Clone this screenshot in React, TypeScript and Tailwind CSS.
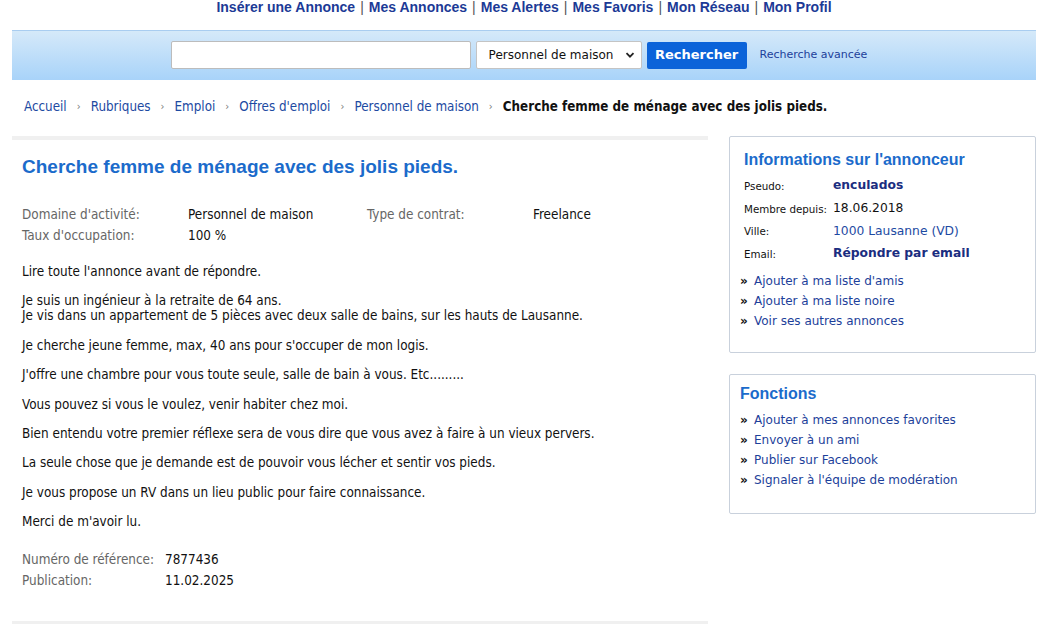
import React from 'react';

const navLinks = ['Insérer une Annonce', 'Mes Annonces', 'Mes Alertes', 'Mes Favoris', 'Mon Réseau', 'Mon Profil'];
const crumbs = ['Accueil', 'Rubriques', 'Emploi', "Offres d'emploi", 'Personnel de maison'];

const paragraphs: string[][] = [
  ["Lire toute l'annonce avant de répondre."],
  [
    'Je suis un ingénieur à la retraite de 64 ans.',
    'Je vis dans un appartement de 5 pièces avec deux salle de bains, sur les hauts de Lausanne.',
  ],
  ["Je cherche jeune femme, max, 40 ans pour s'occuper de mon logis."],
  ['J\'offre une chambre pour vous toute seule, salle de bain à vous. Etc.........'],
  ['Vous pouvez si vous le voulez, venir habiter chez moi.'],
  ['Bien entendu votre premier réflexe sera de vous dire que vous avez à faire à un vieux pervers.'],
  ['La seule chose que je demande est de pouvoir vous lécher et sentir vos pieds.'],
  ['Je vous propose un RV dans un lieu public pour faire connaissance.'],
  ["Merci de m'avoir lu."],
];

const tahoma = "font-['Tahoma','DejaVu_Sans_Condensed','Liberation_Sans',sans-serif]";
const verdana = "font-['Verdana','DejaVu_Sans',sans-serif]";
const arial = "font-['Arial','Liberation_Sans',sans-serif]";

function LinkList({ items }: { items: string[] }) {
  return (
    <ul className={`${verdana} text-[12px] leading-[20px]`}>
      {items.map((t) => (
        <li key={t} className="flex items-center">
          <span className="w-[14px] text-[12px] font-bold text-[#111]">»</span>
          <a href="#" className="text-[#1d3f9a]">{t}</a>
        </li>
      ))}
    </ul>
  );
}

function App() {
  return (
    <div className="min-h-screen bg-white">
      <div className="mx-3 w-[1024px]">
        {/* top navigation */}
        <nav className={`${arial} flex h-[30px] justify-center text-[14px] font-bold leading-[14px] text-[#1c3a96]`}>
          {navLinks.map((l, i) => (
            <span key={l}>
              {i > 0 && <span className="px-[5px] font-normal text-[#555]">|</span>}
              <a href="#">{l}</a>
            </span>
          ))}
        </nav>

        {/* search bar */}
        <div className="flex h-[50px] items-center justify-center gap-[5px] border-t border-[#a9cdf0] bg-gradient-to-b from-[#d5e9f9] to-[#a8d3f9] pb-[1px] pr-[10px]">
          <input className="h-[28px] w-[300px] rounded-[2px] border border-[#bcbcbc] bg-white" />
          <div className={`${verdana} flex h-[28px] w-[166px] items-center justify-between rounded-[2px] border border-[#c4c4c4] bg-white pl-[12px] pr-[6px] text-[12px] text-[#111]`}>
            <span>Personnel de maison</span>
            <svg width="10" height="10" viewBox="0 0 10 10">
              <path d="M1.5 3.2 L5 6.7 L8.5 3.2" fill="none" stroke="#222" strokeWidth="1.8" />
            </svg>
          </div>
          <button className={`${verdana} h-[27px] w-[100px] rounded-[2px] bg-[#0b63d9] text-[13px] font-bold text-white`}>
            Rechercher
          </button>
          <a href="#" className={`${verdana} ml-[8px] text-[11px] text-[#1d3f9a]`}>
            Recherche avancée
          </a>
        </div>

        {/* breadcrumb */}
        <div className={`${tahoma} flex h-[56px] items-center pb-[2px] pl-[12px] text-[13.3px]`}>
          {crumbs.map((c) => (
            <span key={c} className="flex items-center">
              <a href="#" className="text-[#1d4aa2]">{c}</a>
              <span className="px-[10px] text-[11px] text-[#777]">›</span>
            </span>
          ))}
          <span className="font-bold text-[#111]">Cherche femme de ménage avec des jolis pieds.</span>
        </div>

        <div className="flex gap-[21px]">
          {/* main column */}
          <div className="w-[696px]">
            <div className="h-[4px] bg-[#f0f0f0]" />
            <div className={`${tahoma} px-[10px] pb-[30px] text-[13.4px] text-[#111]`}>
              <h1 className={`${arial} mt-[16px] text-[19px] font-bold leading-[22px] text-[#1b6bcb]`}>
                Cherche femme de ménage avec des jolis pieds.
              </h1>
              <div className="mt-[26px] grid grid-cols-[166px_179px_166px_1fr] leading-[21px]">
                <span className="text-[#666]">Domaine d'activité:</span>
                <span>Personnel de maison</span>
                <span className="text-[#666]">Type de contrat:</span>
                <span>Freelance</span>
                <span className="text-[#666]">Taux d'occupation:</span>
                <span>100 %</span>
              </div>
              <div className="mt-[18px] flex flex-col gap-[14.4px] leading-[15px]">
                {paragraphs.map((p, i) => (
                  <p key={i}>
                    {p.map((line, j) => (
                      <React.Fragment key={j}>
                        {j > 0 && <br />}
                        {line}
                      </React.Fragment>
                    ))}
                  </p>
                ))}
              </div>
              <div className="mt-[20px] grid grid-cols-[143px_1fr] leading-[21px]">
                <span className="text-[#666]">Numéro de référence:</span>
                <span>7877436</span>
                <span className="text-[#666]">Publication:</span>
                <span>11.02.2025</span>
              </div>
            </div>
            <div className="h-[4px] bg-[#f0f0f0]" />
          </div>

          {/* sidebar */}
          <div className="flex w-[307px] flex-col gap-[21px]">
            <div className="rounded-[2px] border border-[#c9d1dc] px-[10px] pb-[21px] pt-[13px]">
              <h2 className={`${arial} ml-[4px] text-[16px] font-bold leading-[20px] text-[#1b6bcb]`}>
                Informations sur l'annonceur
              </h2>
              <div className={`${verdana} ml-[4px] mt-[4px] grid grid-cols-[89px_1fr] items-center`}>
                <span className="h-[22.7px] pt-[5px] text-[10.3px] text-[#111]">Pseudo:</span>
                <span className="text-[12.3px] font-bold text-[#1b2d80]">enculados</span>
                <span className="h-[22.7px] pt-[5px] text-[10.3px] text-[#111]">Membre depuis:</span>
                <span className="text-[12.3px] text-[#111]">18.06.2018</span>
                <span className="h-[22.7px] pt-[5px] text-[10.3px] text-[#111]">Ville:</span>
                <span className="text-[12.3px] text-[#1d4aa2]">1000 Lausanne (VD)</span>
                <span className="h-[22.7px] pt-[5px] text-[10.3px] text-[#111]">Email:</span>
                <span className="text-[12.3px] font-bold text-[#1b2d80]">Répondre par email</span>
              </div>
              <div className="mt-[6px]">
                <LinkList items={["Ajouter à ma liste d'amis", 'Ajouter à ma liste noire', 'Voir ses autres annonces']} />
              </div>
            </div>

            <div className="rounded-[2px] border border-[#c9d1dc] px-[10px] pb-[23px] pt-[9px]">
              <h2 className={`${arial} text-[16px] font-bold leading-[20px] text-[#1b6bcb]`}>Fonctions</h2>
              <div className="mt-[6px]">
                <LinkList
                  items={[
                    'Ajouter à mes annonces favorites',
                    'Envoyer à un ami',
                    'Publier sur Facebook',
                    "Signaler à l'équipe de modération",
                  ]}
                />
              </div>
            </div>
          </div>
        </div>
      </div>
    </div>
  );
}

export default App;
